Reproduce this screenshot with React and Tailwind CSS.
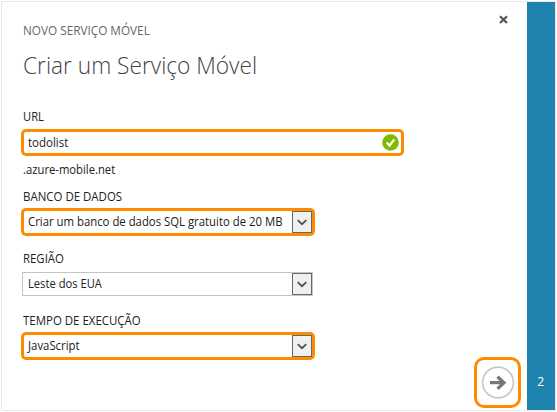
function Chevron() {
  return (
    <span className="flex h-[22px] w-[20px] shrink-0 items-center justify-center border border-[#686868] bg-[#f0f0f0]">
      <svg width="10" height="8" viewBox="0 0 10 8" fill="none">
        <path d="M0.7 2.2 5 6.2 9.3 2.2" stroke="#505050" strokeWidth="1.8" />
      </svg>
    </span>
  );
}

function Label({ children, scale }) {
  return (
    <div className="ml-[2px] h-[18px] text-[12px] leading-[18px] whitespace-nowrap">
      <span className={"inline-block origin-left " + scale}>{children}</span>
    </div>
  );
}

function Select({ children, scale, highlighted }) {
  const frame = highlighted
    ? "h-[28px] w-[294px] rounded-[5px] border-[3px] border-[#ff8c00] pl-[4px]"
    : "ml-px h-[24px] w-[291px] border border-[#c4c4c4] pl-[5px]";
  return (
    <div className={"flex items-center bg-white text-[12.5px] leading-[18px] whitespace-nowrap " + frame}>
      <span className={"w-0 flex-1 origin-left " + scale}>{children}</span>
      <Chevron />
    </div>
  );
}

export default function App() {
  return (
    <div className="h-[412px] w-[557px] bg-white p-px font-['Open_Sans','Noto_Sans',sans-serif] text-[#222]">
      <div className="flex h-[410px] w-[555px] border border-[#e8e8e8]">
        <main className="flex w-[525px] justify-between bg-white">
          <div className="w-[390px] pt-[20px] pl-[19px]">
            <div className="ml-[2px] h-[18px] text-[12px] leading-[18px] whitespace-nowrap text-[#666]">
              <span className="inline-block origin-left scale-x-[0.98]">NOVO SERVIÇO MÓVEL</span>
            </div>
            <h1 className="mt-[8px] ml-[2px] h-[34px] text-[24px] leading-[34px] font-light whitespace-nowrap text-[#444]">
              <span className="inline-block origin-left scale-x-[0.945]">Criar um Serviço Móvel</span>
            </h1>
            <div className="mt-[26px]">
              <Label scale="scale-x-[0.93]">URL</Label>
            </div>
            <div className="mt-[3px] flex h-[27px] w-[383px] items-center justify-between rounded-[5px] border-[3px] border-[#ff8c00] pr-[2px] pl-[4px] text-[12.5px] leading-[18px]">
              <span className="inline-block origin-left scale-x-[0.92]">todolist</span>
              <svg width="17" height="17" viewBox="0 0 17 17" fill="none">
                <circle cx="8.5" cy="8.5" r="8.3" fill="#7fba00" />
                <path d="m4.7 8.6 2.8 2.9 4.8-6" stroke="#fff" strokeWidth="2.2" />
              </svg>
            </div>
            <div className="mt-[5px] ml-[2px] h-[18px] text-[12.5px] leading-[18px]">
              <span className="inline-block origin-left scale-x-[0.9]">.azure-mobile.net</span>
            </div>
            <div className="mt-[9px]">
              <Label scale="scale-x-[0.955]">BANCO DE DADOS</Label>
            </div>
            <div className="mt-[2px]">
              <Select highlighted scale="scale-x-[0.908]">Criar um banco de dados SQL gratuito de 20 MB</Select>
            </div>
            <div className="mt-[14px]">
              <Label scale="scale-x-[0.95]">REGIÃO</Label>
            </div>
            <div className="mt-[4px]">
              <Select scale="scale-x-[0.895]">Leste dos EUA</Select>
            </div>
            <div className="mt-[16px]">
              <Label scale="scale-x-[0.955]">TEMPO DE EXECUÇÃO</Label>
            </div>
            <div className="mt-[2px]">
              <Select highlighted scale="scale-x-[0.91]">JavaScript</Select>
            </div>
          </div>
          <div className="flex w-[53px] flex-col justify-between pt-[13px] pb-[2px]">
            <button className="ml-[25px] h-[9px] w-[9px]" aria-label="Fechar">
              <svg width="9" height="9" viewBox="0 0 9 9" fill="none">
                <path d="m1 1.2 7 6.8M8 1.2 1 8" stroke="#555" strokeWidth="2.2" />
              </svg>
            </button>
            <button className="flex h-[51px] w-[47px] items-center justify-center rounded-[10px] border-[3px] border-[#ff8c00]" aria-label="Avançar">
              <svg width="34" height="34" viewBox="0 0 34 34" fill="none">
                <circle cx="17" cy="16.5" r="15.4" stroke="#c8c8c8" strokeWidth="1.7" />
                <path d="M9 16.7h14M16.5 10.7l6.5 6-6.5 6" stroke="#777" strokeWidth="3.2" />
              </svg>
            </button>
          </div>
        </main>
        <aside className="flex w-[28px] items-end justify-center bg-[#1f83b0] pb-[20px] text-[13px] leading-[18px] text-white">
          <span className="inline-block scale-x-[0.93]">2</span>
        </aside>
      </div>
    </div>
  );
}
